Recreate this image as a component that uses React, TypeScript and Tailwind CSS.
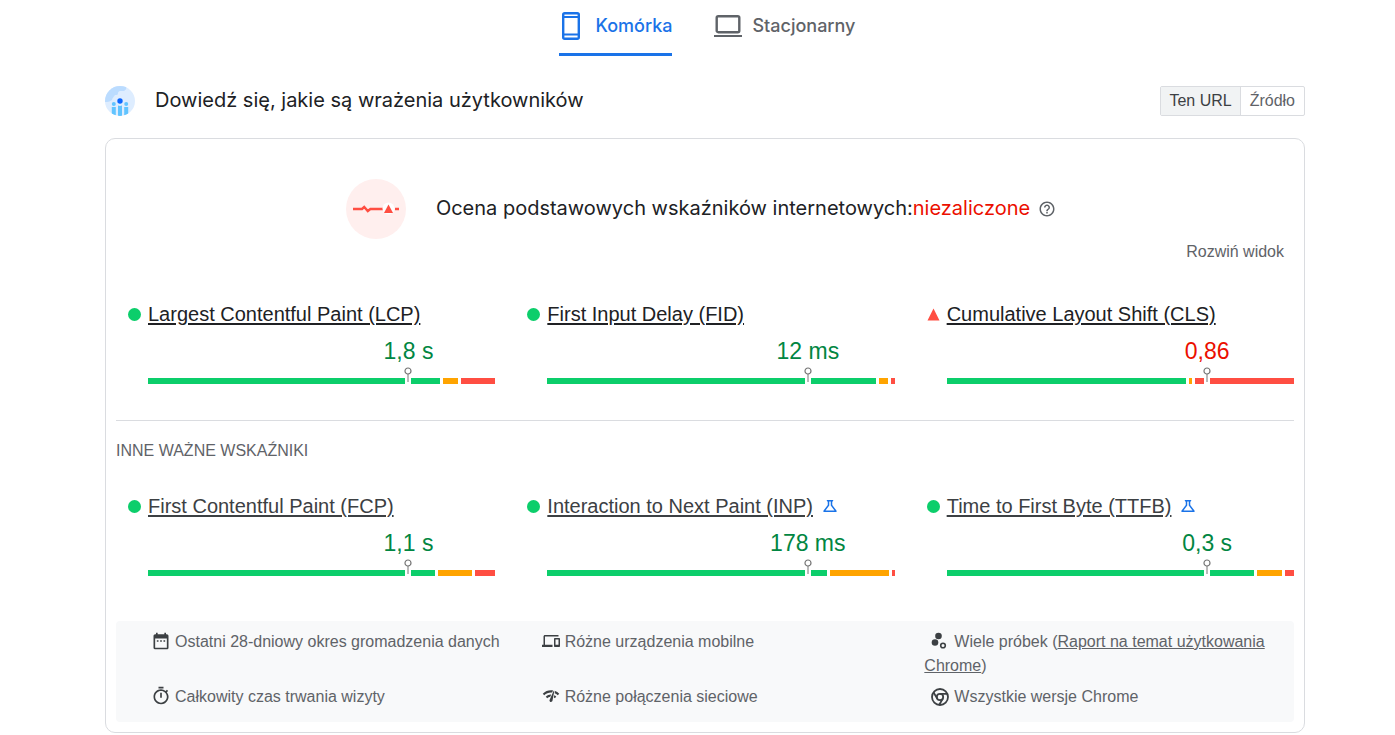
import { useState } from 'react'
import {
  MdDateRange,
  MdHelpOutline,
  MdNetworkCheck,
  MdOutlineDevices,
  MdOutlineScience,
  MdOutlineTimer,
} from 'react-icons/md'

type Metric = {
  name: string
  value: string
  passed: boolean
  experimental?: boolean
  // good / needs improvement / poor
  shares: number[]
}

const coreMetrics: Metric[] = [
  { name: 'Largest Contentful Paint (LCP)', value: '1,8 s', passed: true, shares: [292, 15, 34] },
  { name: 'First Input Delay (FID)', value: '12 ms', passed: true, shares: [328, 9, 4] },
  { name: 'Cumulative Layout Shift (CLS)', value: '0,86', passed: false, shares: [239, 3, 99] },
]

const otherMetrics: Metric[] = [
  { name: 'First Contentful Paint (FCP)', value: '1,1 s', passed: true, shares: [287, 34, 20] },
  { name: 'Interaction to Next Paint (INP)', value: '178 ms', passed: true, experimental: true, shares: [279, 59, 3] },
  { name: 'Time to First Byte (TTFB)', value: '0,3 s', passed: true, experimental: true, shares: [307, 25, 9] },
]

const barColors = ['bg-[#0cce6b]', 'bg-[#ffa400]', 'bg-[#ff4e42]']

function PhoneIcon() {
  return (
    <svg width="18" height="28" viewBox="0 0 18 28" fill="none" stroke="currentColor" strokeWidth="2.4">
      <rect x="1.2" y="1.2" width="15.6" height="25.6" rx="1.5" />
      <path d="M1 5h16M1 22.6h16" strokeWidth="2" />
    </svg>
  )
}

function LaptopIcon() {
  return (
    <svg width="28" height="22" viewBox="0 0 28 22" fill="none" stroke="currentColor" strokeWidth="2.4">
      <rect x="2.7" y="1.2" width="22.6" height="16" rx="1.5" />
      <path d="M0 21h28" strokeWidth="2" />
    </svg>
  )
}

function UsersIcon() {
  return (
    <svg width="30" height="30" viewBox="0 0 30 30">
      <defs>
        <clipPath id="users-clip">
          <circle cx="15" cy="15" r="15" />
        </clipPath>
      </defs>
      <g clipPath="url(#users-clip)">
        <rect width="30" height="30" fill="#deedff" />
        <path d="M0 0h21c1 2 0 4-2 5h-4c-1 0-2 1-2 2 0 2-1 2-3 2-1 2-3 3-3 5-2 1-3 2-5 2H0z" fill="#bbdcff" />
        <g fill="#61c4ff">
          <circle cx="8.8" cy="18" r="2" />
          <circle cx="21.2" cy="18" r="2" />
          <path d="M6.8 21h4v9h-4zM19.2 21h4v9h-4zM13 19.5c1.2.6 2.8.6 4 0V30h-4z" />
        </g>
        <circle cx="15" cy="15" r="2.7" fill="#0b66ff" />
      </g>
    </svg>
  )
}

function PulseIcon() {
  return (
    <svg width="60" height="60" viewBox="0 0 60 60">
      <circle cx="30" cy="30" r="30" fill="#ffefee" />
      <path d="M7 30h9l2.2-2 3.6 4 2.6-2H39M49 30h4" fill="none" stroke="#ff4e42" strokeWidth="2.4" />
      <circle cx="42.5" cy="29.5" r="6" fill="#fff" />
      <path d="M42.5 25.5l4.5 8.5h-9z" fill="#ff4e42" />
    </svg>
  )
}

function SamplesIcon() {
  return (
    <svg width="16" height="18" viewBox="0 0 16 18" fill="currentColor">
      <circle cx="7.5" cy="4" r="3.3" />
      <circle cx="4" cy="10.5" r="3.3" />
      <circle cx="12" cy="13.5" r="2.3" fill="none" stroke="currentColor" strokeWidth="1.6" />
    </svg>
  )
}

function ChromeIcon() {
  return (
    <svg width="18" height="18" viewBox="0 0 18 18" fill="none" stroke="currentColor" strokeWidth="1.8">
      <circle cx="9" cy="9" r="8" />
      <circle cx="9" cy="9" r="3.2" />
      <path d="M9 5.8h7.4M6.2 10.6L2.5 4.2M11.8 10.6L8.1 17" />
    </svg>
  )
}

function MetricItem({ metric, muted }: { metric: Metric; muted?: boolean }) {
  return (
    <div>
      <div className="flex h-6 items-center pl-3">
        <span className="w-5 shrink-0">
          {metric.passed ? (
            <svg width="13" height="13" viewBox="0 0 13 13">
              <circle cx="6.5" cy="6.5" r="6.5" fill="#0cce6b" />
            </svg>
          ) : (
            <svg width="13" height="13" viewBox="0 0 13 13">
              <path d="M6.5 0.5l6 12h-12z" fill="#ff4e42" />
            </svg>
          )}
        </span>
        <a
          href="#"
          className={`text-[20px] leading-6 underline decoration-2 underline-offset-2 ${muted ? 'text-[#3c4043]' : 'text-[#202124]'}`}
        >
          {metric.name}
        </a>
        {metric.experimental && <MdOutlineScience className="ml-2 size-[18px] text-[#1a73e8]" />}
      </div>

      <div className="ml-8">
        {/* Value is centered over the marker at 75% of the bar */}
        <div className={`pt-[11px] pl-[50%] text-center text-[23px] leading-7 ${metric.passed ? 'text-[#018642]' : 'text-[#eb0f00]'}`}>
          {metric.value}
        </div>
        <div className="relative mt-[13px] flex h-1.5 gap-[3px]">
          {metric.shares.map((share, i) => (
            <div key={i} className={barColors[i]} style={{ flexGrow: share, flexBasis: 0 }} />
          ))}
          <div className="absolute bottom-0 left-3/4 flex h-[17px] w-1.5 -translate-x-1/2 flex-col items-center">
            <div className="absolute bottom-0 h-1.5 w-1.5 bg-white" />
            <svg className="relative shrink-0" width="8" height="16" viewBox="0 0 8 16" fill="none" stroke="#757575">
              <circle cx="4" cy="4" r="3" fill="#fff" strokeWidth="1.2" />
              <path d="M4 7v8" />
            </svg>
          </div>
        </div>
      </div>
    </div>
  )
}

export default function App() {
  const [device, setDevice] = useState('mobile')
  const [scope, setScope] = useState('url')

  const tabClass = (active: boolean) =>
    `flex h-14 items-center border-b-[3px] pb-0.5 whitespace-nowrap ${active ? 'border-[#1a73e8] text-[#1a73e8]' : 'border-transparent text-[#5f6368]'}`

  return (
    <div className="bg-white pl-[15px] font-['Liberation_Sans',Arial,sans-serif] text-[#5f6368]">
      <div className="mx-auto max-w-[1200px]">
        <nav className="flex justify-center gap-[42px] pl-1 font-['Inter',sans-serif] text-[18px] font-medium">
          <button className={tabClass(device === 'mobile')} onClick={() => setDevice('mobile')}>
            <span className="mr-4 ml-[3px]"><PhoneIcon /></span>
            Komórka
          </button>
          <button className={tabClass(device === 'desktop')} onClick={() => setDevice('desktop')}>
            <span className="mr-2.5"><LaptopIcon /></span>
            Stacjonarny
          </button>
        </nav>

        <header className="mt-[30px] flex h-[30px] items-center">
          <UsersIcon />
          <h1 className="ml-5 pb-0.5 font-['Inter',sans-serif] text-[20px] text-[#202124]">
            Dowiedź się, jakie są wrażenia użytkowników
          </h1>
          <div className="ml-auto flex h-[30px] overflow-hidden rounded-xs border border-[#dadce0] text-base">
            <button
              className={`px-2 ${scope === 'url' ? 'bg-[#f1f3f4] text-[#3c4043]' : ''}`}
              onClick={() => setScope('url')}
            >
              Ten URL
            </button>
            <button
              className={`border-l border-[#dadce0] px-[9px] ${scope === 'origin' ? 'bg-[#f1f3f4] text-[#3c4043]' : ''}`}
              onClick={() => setScope('origin')}
            >
              Źródło
            </button>
          </div>
        </header>

        <main className="mt-[22px] rounded-[10px] border border-[#dadce0] px-2.5 pb-2.5">
          <div className="flex items-center justify-center pt-10 pr-2">
            <PulseIcon />
            <h2 className="ml-[30px] pb-0.5 font-['Inter',sans-serif] text-[20px] text-[#202124]">
              Ocena podstawowych wskaźników internetowych:
              <span className="text-[#eb0f00]">niezaliczone</span>
            </h2>
            <button className="ml-2" aria-label="Pomoc">
              <MdHelpOutline className="size-[18px]" />
            </button>
          </div>

          <div className="flex justify-end pt-px pr-2.5">
            <button className="text-[16px] leading-6">Rozwiń widok</button>
          </div>

          <section className="mt-[38px] grid grid-cols-3 gap-5 border-b border-[#dadce0] pb-9">
            {coreMetrics.map((m) => (
              <MetricItem key={m.name} metric={m} />
            ))}
          </section>

          <h3 className="mt-[18px] text-[16px] leading-6">INNE WAŻNE WSKAŹNIKI</h3>
          <section className="mt-[31px] grid grid-cols-3 gap-5">
            {otherMetrics.map((m) => (
              <MetricItem key={m.name} metric={m} muted />
            ))}
          </section>

          <ul className="mt-[45px] grid grid-cols-3 gap-x-8 gap-y-[7px] rounded bg-[#f8f9fa] pt-[9px] pr-3 pb-3 pl-[29px] text-[16px] leading-6">
            <li>
              <MdDateRange className="mr-1 mb-1 ml-1.5 inline size-5 text-[#3c4043]" />
              Ostatni 28-dniowy okres gromadzenia danych
            </li>
            <li>
              <MdOutlineDevices className="mr-[5px] mb-1 ml-[7px] inline size-[18px] text-[#3c4043]" />
              Różne urządzenia mobilne
            </li>
            <li>
              <span className="mr-[7px] mb-1 ml-[7px] inline-block align-middle text-[#3c4043]"><SamplesIcon /></span>
              Wiele próbek (
              <a href="#" className="underline">Raport na temat użytkowania Chrome</a>)
            </li>
            <li>
              <MdOutlineTimer className="mr-1 mb-1 ml-1.5 inline size-5 text-[#3c4043]" />
              Całkowity czas trwania wizyty
            </li>
            <li>
              <MdNetworkCheck className="mr-[5px] mb-1 ml-[7px] inline size-[18px] text-[#3c4043]" />
              Różne połączenia sieciowe
            </li>
            <li>
              <span className="mr-[5px] mb-0.5 ml-[7px] inline-block align-middle text-[#3c4043]"><ChromeIcon /></span>
              Wszystkie wersje Chrome
            </li>
          </ul>
        </main>
      </div>
    </div>
  )
}
